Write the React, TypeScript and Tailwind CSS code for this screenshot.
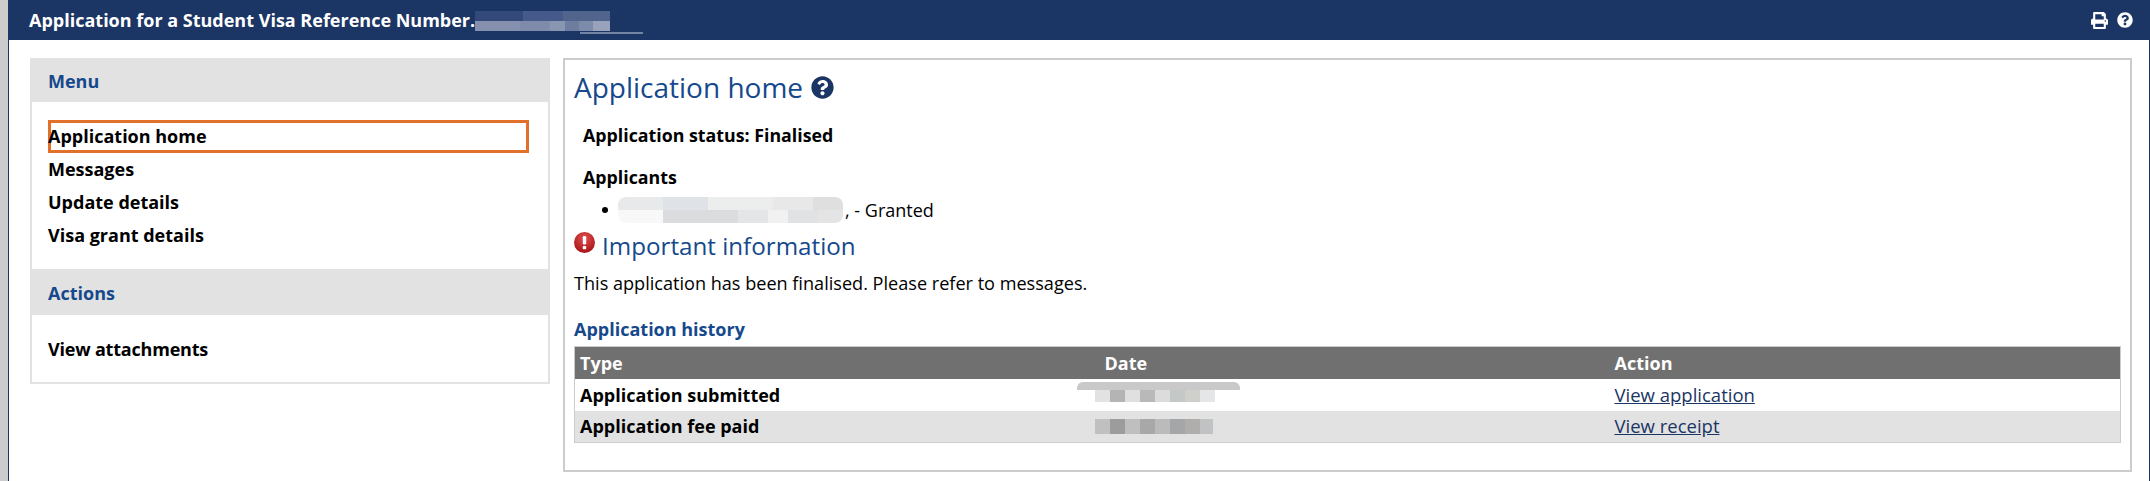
import { FaPrint, FaQuestionCircle } from "react-icons/fa";

const font = "font-['Open_Sans',sans-serif]";

// pixelated patches that hide personal details in the screenshot
function Blur({ blocks, className }: { blocks: [number, string][]; className: string }) {
  return (
    <span className={`flex ${className}`}>
      {blocks.map(([w, c], i) => (
        <span key={i} className="h-full" style={{ width: w, background: c }} />
      ))}
    </span>
  );
}

function ImportantIcon() {
  return (
    <svg width="21" height="21" viewBox="0 0 21 21" className="mt-[2px] shrink-0">
      <defs>
        <radialGradient id="red" cx="50%" cy="30%" r="70%">
          <stop offset="0%" stopColor="#e2504f" />
          <stop offset="100%" stopColor="#a81416" />
        </radialGradient>
      </defs>
      <circle cx="10.5" cy="10.5" r="10.5" fill="url(#red)" />
      <rect x="8.8" y="4" width="3.4" height="8.5" rx="1.2" fill="#fff" />
      <rect x="8.8" y="14" width="3.4" height="3.2" rx="0.8" fill="#fff" />
    </svg>
  );
}

const menu = ["Application home", "Messages", "Update details", "Visa grant details"];

const rows: { type: string; action: string; bg: string; blocks: [number, string][] }[] = [
  {
    type: "Application submitted",
    action: "View application",
    bg: "bg-white",
    blocks: [[15, "#e2e2e2"], [15, "#b4b4b4"], [15, "#e0e0e0"], [15, "#b9b9b9"], [15, "#dcdcdc"], [15, "#c4c8c6"], [15, "#cfcfcc"], [15, "#e4e6e8"]],
  },
  {
    type: "Application fee paid",
    action: "View receipt",
    bg: "bg-[#e2e2e2]",
    blocks: [[15, "#c0c0c0"], [15, "#9c9c9c"], [15, "#bfbfbf"], [15, "#a8a8a8"], [15, "#bbbbbb"], [15, "#a4a6a8"], [15, "#b0aeac"], [13, "#c0c2c4"]],
  },
];

export default function App() {
  return (
    <div className={`flex h-[481px] w-full overflow-hidden bg-white text-black ${font}`}>
      <div className="w-2 shrink-0 bg-[#cccccc]" />
      <div className="flex min-w-0 flex-1 flex-col border-x-[1px] border-[#1b3564]">
        {/* Top bar */}
        <header className="flex h-10 shrink-0 items-center justify-between bg-[#1b3564] pl-[20px] pr-[16px] text-white">
          <div className="flex items-center">
            <span className="text-[18px] font-bold leading-[26px]">Application for a Student Visa Reference Number.</span>
            <span className="flex h-[28px] w-[168px] flex-col">
              <Blur className="mt-[5px] h-[10px]" blocks={[[48, "#33497a"], [40, "#45598a"], [47, "#51648c"]]} />
              <Blur className="h-[10px]" blocks={[[45, "#8490ad"], [30, "#7e8baa"], [15, "#8896b2"], [14, "#6e7d9f"], [14, "#7d8bab"], [17, "#98a3bb"]]} />
              <Blur className="ml-[105px] mt-[1px] h-[2px]" blocks={[[63, "#7384a5"]]} />
            </span>
          </div>
          <div className="flex items-center gap-[9px]">
            <FaPrint size={17} />
            <FaQuestionCircle size={16} />
          </div>
        </header>

        <div className="flex flex-1 gap-[13px] pl-[21px] pr-[17px] pt-[18px]">
          {/* Sidebar */}
          <aside className="h-[326px] w-[520px] shrink-0 border-2 border-[#e2e2e2]">
            <h2 className="flex h-[42px] items-center bg-[#e2e2e2] pl-[16px] text-[18px] font-bold text-[#16498c]">Menu</h2>
            <ul className="pt-[18px] text-[18px] font-bold">
              {menu.map((item, i) => (
                <li key={item} className="flex h-[33px] items-center pl-[16px] pr-[19px]">
                  <a className={`flex h-[33px] w-full items-center ${i === 0 ? "border-[3px] border-[#e0702a]" : ""}`}>
                    <span className={i === 0 ? "-ml-[3px]" : ""}>{item}</span>
                  </a>
                </li>
              ))}
            </ul>
            <h2 className="mt-[17px] flex h-[46px] items-center bg-[#e2e2e2] pl-[16px] pt-[3px] text-[18px] font-bold text-[#16498c]">Actions</h2>
            <div className="flex h-[69px] items-center pl-[16px] text-[18px] font-bold tracking-[-0.2px]">View attachments</div>
          </aside>

          {/* Main panel */}
          <main className="h-[414px] min-w-0 flex-1 border-2 border-[#cccccc] pl-[9px] pr-[9px]">
            <h1 className="mt-[9px] flex items-center gap-[8px] text-[28px] leading-[36px] text-[#16498c]">
              Application home
              <FaQuestionCircle size={23} className="text-[#1b3564]" />
            </h1>
            <p className="mt-[17px] pl-[9px] text-[17.8px] font-bold leading-[26px]">Application status: Finalised</p>
            <p className="mt-[16px] pl-[9px] text-[17.8px] font-bold leading-[26px]">Applicants</p>
            <ul className="mt-[8px] pl-[28px] text-[18px]">
              <li className="flex h-[24px] items-center">
                <span className="mr-[10px] h-[6px] w-[6px] rounded-full bg-black" />
                <span className="flex h-[26px] w-[225px] flex-col overflow-hidden rounded-[8px]">
                  <Blur className="h-[13px]" blocks={[[45, "#e8e9eb"], [45, "#dfe3e8"], [65, "#eceded"], [40, "#e8e8e8"], [30, "#dfdfdf"]]} />
                  <Blur className="h-[13px]" blocks={[[45, "#f8f8f8"], [75, "#dbdcdd"], [30, "#e4e5e6"], [20, "#f1f1f1"], [30, "#e1e2e3"], [25, "#e4e4e4"]]} />
                </span>
                <span className="ml-[2px] leading-[26px]">, - Granted</span>
              </li>
            </ul>
            <h2 className="mt-[8px] flex items-start gap-[7px] text-[24.2px] leading-[32px] text-[#16498c]">
              <ImportantIcon />
              Important information
            </h2>
            <p className="mt-[8px] text-[18.1px] leading-[26px]">This application has been finalised. Please refer to messages.</p>
            <h3 className="mt-[20px] text-[18px] font-bold leading-[26px] text-[#16498c]">Application history</h3>
            <table className="mt-[4px] w-full table-fixed border border-[#cccccc] text-[18px] leading-[26px]">
              <thead>
                <tr className="h-[32px] bg-[#707070] text-left text-white">
                  <th className="w-[525px] pl-[5px] font-bold">Type</th>
                  <th className="w-[510px] pl-[5px] font-bold">Date</th>
                  <th className="pl-[5px] font-bold">Action</th>
                </tr>
              </thead>
              <tbody>
                {rows.map((row, i) => (
                  <tr key={row.type} className={`h-[32px] ${row.bg}`}>
                    <td className="pl-[5px] font-bold">{row.type}</td>
                    <td className="pl-[5px]">
                      <span className={`-ml-[10px] flex flex-col ${i === 0 ? "-mt-[6px]" : "mt-[1px]"}`}>
                        {i === 0 && <span className="-ml-[18px] h-[8px] w-[163px] rounded-t-[6px] bg-[#c9c9c9]" />}
                        <Blur className={i === 0 ? "h-[12px]" : "h-[15px]"} blocks={row.blocks} />
                      </span>
                    </td>
                    <td className="pl-[5px]">
                      <a className="text-[18.5px] text-[#1b3564] underline">{row.action}</a>
                    </td>
                  </tr>
                ))}
              </tbody>
            </table>
          </main>
        </div>
      </div>
    </div>
  );
}
